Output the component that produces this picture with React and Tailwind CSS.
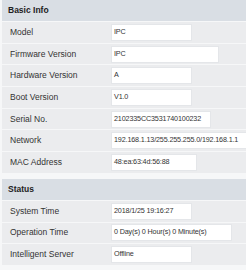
const BASIC = [
  { label: "Model", value: "IPC", w: "w-[81px]" },
  { label: "Firmware Version", value: "IPC", w: "w-[108px]" },
  { label: "Hardware Version", value: "A", w: "w-[81px]" },
  { label: "Boot Version", value: "V1.0", w: "w-[81px]" },
  { label: "Serial No.", value: "2102335CC3531740100232", w: "w-[100px]" },
  { label: "Network", value: "192.168.1.13/255.255.255.0/192.168.1.1", w: "w-[137px]" },
  { label: "MAC Address", value: "48:ea:63:4d:56:88", w: "w-[86px]" },
];

const STATUS = [
  { label: "System Time", value: "2018/1/25 19:16:27", w: "w-[81px]" },
  { label: "Operation Time", value: "0 Day(s) 0 Hour(s) 0 Minute(s)", w: "w-[121px]" },
  { label: "Intelligent Server", value: "Offline", w: "w-[81px]" },
];

function Row({ label, value, w }) {
  return (
    <div className="flex h-[20.7px] items-center bg-[#ebecee]">
      <span className="w-[109px] shrink-0 pl-[8px] text-[8.5px] text-[#333]">{label}</span>
      <span
        className={`${w} flex h-[17px] shrink-0 items-center overflow-hidden whitespace-nowrap border border-[#e4e6e9] bg-white pl-[2px] text-[7.2px] tracking-[-0.15px] text-[#333]`}
      >
        {value}
      </span>
    </div>
  );
}

function Section({ title, rows }) {
  return (
    <div className="flex flex-col gap-px">
      <div className="flex h-[21px] items-center bg-[#d9dee4] pl-[6px] text-[8.5px] font-bold text-[#222]">
        {title}
      </div>
      {rows.map((r) => (
        <Row key={r.label} {...r} />
      ))}
    </div>
  );
}

export default function App() {
  return (
    <div
      className="h-[270px] w-[246px] overflow-hidden bg-[#f6f7f8] pl-[2px]"
      style={{ fontFamily: '"Liberation Sans", Arial, sans-serif' }}
    >
      <Section title="Basic Info" rows={BASIC} />
      <div className="h-[6px]" />
      <Section title="Status" rows={STATUS} />
    </div>
  );
}
